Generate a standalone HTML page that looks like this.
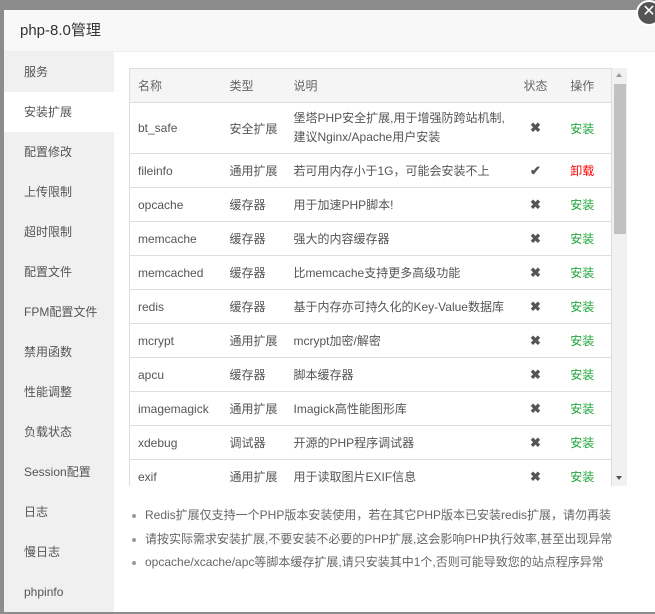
<!DOCTYPE html>
<html><head><meta charset="utf-8"><style>
*{margin:0;padding:0;box-sizing:border-box}
body{width:655px;height:614px;background:#8c8c8c;position:relative;overflow:hidden;font-family:"Liberation Sans","Noto Sans CJK SC",sans-serif;font-size:12px;color:#555}
.dlg{position:absolute;left:4px;top:10px;width:651px;height:602px;background:#fff}
.hd{height:42px;background:#f8f8f8;border-bottom:1px solid #eee;font-size:15px;color:#333;line-height:42px;padding-left:16px}
.side{position:absolute;left:0;top:42px;width:110px;height:560px;background:#f0f0f0}
.side div{height:40px;line-height:40px;padding-left:20px;font-size:12px;color:#555}
.side .on{background:#fff}
.tw{position:absolute;left:125px;top:58px;width:498px;height:418px;overflow:hidden}
table{border-collapse:collapse;width:483px;border:1px solid #ddd}
td,th{border-bottom:1px solid #ddd;text-align:left;font-weight:normal;padding:0 0 0 8px;height:34px;color:#555}
th{background:#f5f5f5;color:#666}
.c{text-align:center;padding:0}
.g{color:#20a53a}.r{color:#f00}
.x{color:#555;font-weight:bold;font-size:13px}
.sb{position:absolute;left:483px;top:0;width:15px;height:418px;background:#f1f1f1}
.sb .t{position:absolute;left:2px;top:16px;width:12px;height:150px;background:#c1c1c1}
.tips{position:absolute;left:126px;top:494px;list-style:none}
.tips li{height:23.5px;line-height:23.5px;color:#666;padding-left:15px;position:relative}
.tips li:before{content:"";position:absolute;left:2px;top:10px;width:4px;height:4px;border-radius:2px;background:#999}
.close{position:absolute;left:636px;top:0;width:26px;height:26px;border-radius:13px;background:#555;border:2px solid #fff;color:#fff;font-size:16px;line-height:20px;text-align:center}
</style></head><body>
<div class="dlg">
<div class="hd">php-8.0管理</div>
<div class="side"><div>服务</div><div class="on">安装扩展</div><div>配置修改</div><div>上传限制</div><div>超时限制</div><div>配置文件</div><div>FPM配置文件</div><div>禁用函数</div><div>性能调整</div><div>负载状态</div><div>Session配置</div><div>日志</div><div>慢日志</div><div>phpinfo</div></div>
<div class="tw"><table>
<tr><th style="width:92px">名称</th><th style="width:64px">类型</th><th>说明</th><th class="c" style="width:36px">状态</th><th class="c" style="width:58px">操作</th></tr>
<tr style="height:51px"><td>bt_safe</td><td>安全扩展</td><td style="line-height:19px">堡塔PHP安全扩展,用于增强防跨站机制,<br>建议Nginx/Apache用户安装</td><td class="c x">✖</td><td class="c g">安装</td></tr>
<tr><td>fileinfo</td><td>通用扩展</td><td>若可用内存小于1G，可能会安装不上</td><td class="c x">✔</td><td class="c r">卸载</td></tr>
<tr><td>opcache</td><td>缓存器</td><td>用于加速PHP脚本!</td><td class="c x">✖</td><td class="c g">安装</td></tr>
<tr><td>memcache</td><td>缓存器</td><td>强大的内容缓存器</td><td class="c x">✖</td><td class="c g">安装</td></tr>
<tr><td>memcached</td><td>缓存器</td><td>比memcache支持更多高级功能</td><td class="c x">✖</td><td class="c g">安装</td></tr>
<tr><td>redis</td><td>缓存器</td><td>基于内存亦可持久化的Key-Value数据库</td><td class="c x">✖</td><td class="c g">安装</td></tr>
<tr><td>mcrypt</td><td>通用扩展</td><td>mcrypt加密/解密</td><td class="c x">✖</td><td class="c g">安装</td></tr>
<tr><td>apcu</td><td>缓存器</td><td>脚本缓存器</td><td class="c x">✖</td><td class="c g">安装</td></tr>
<tr><td>imagemagick</td><td>通用扩展</td><td>Imagick高性能图形库</td><td class="c x">✖</td><td class="c g">安装</td></tr>
<tr><td>xdebug</td><td>调试器</td><td>开源的PHP程序调试器</td><td class="c x">✖</td><td class="c g">安装</td></tr>
<tr><td>exif</td><td>通用扩展</td><td>用于读取图片EXIF信息</td><td class="c x">✖</td><td class="c g">安装</td></tr>
<tr><td>intl</td><td>通用扩展</td><td>国际化</td><td class="c x">✖</td><td class="c g">安装</td></tr>
</table>
<div class="sb"><div class="t"></div><div style="position:absolute;left:4px;top:5px;border:3.5px solid transparent;border-bottom:4px solid #999;border-top:0"></div><div style="position:absolute;left:4px;top:408px;border:3.5px solid transparent;border-top:4px solid #555;border-bottom:0"></div></div>
</div>
<ul class="tips"><li>Redis扩展仅支持一个PHP版本安装使用，若在其它PHP版本已安装redis扩展，请勿再装</li><li>请按实际需求安装扩展,不要安装不必要的PHP扩展,这会影响PHP执行效率,甚至出现异常</li><li>opcache/xcache/apc等脚本缓存扩展,请只安装其中1个,否则可能导致您的站点程序异常</li></ul>
</div>
<div class="close">✕</div>
</body></html>
